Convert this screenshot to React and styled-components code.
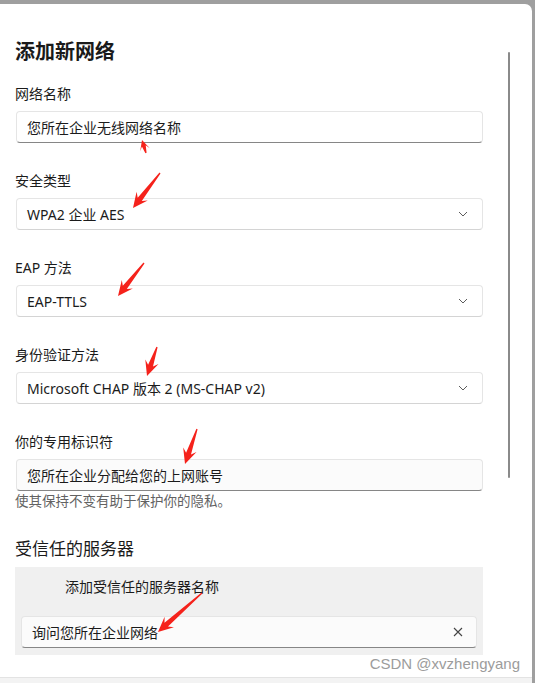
import React from "react";
import styled, { createGlobalStyle } from "styled-components";

const Global = createGlobalStyle`
  html, body { margin: 0; padding: 0; }
  body {
    background: #9f9f9f;
    font-family: "Segoe UI", "Noto Sans", "Noto Sans CJK SC", sans-serif;
    color: #1b1b1b;
    overflow: hidden;
  }
`;

const Page = styled.div`
  position: relative;
  width: 535px;
  height: 683px;
  overflow: hidden;
`;

const Dialog = styled.div`
  position: relative;
  margin-top: 4px;
  width: 532px;
  height: 679px;
  background: #ffffff;
  border-top-right-radius: 7px;
  display: flex;
  flex-direction: column;
  overflow: hidden;
`;

const Content = styled.div`
  flex: 1;
  padding: 34px 0 0 15px;
  overflow: hidden;
`;

const Footer = styled.div`
  height: 5px;
  background: #f3f3f3;
  border-top: 1px solid #e3e3e3;
`;

const Title = styled.h1`
  margin: 0 0 18px;
  font-size: 20px;
  line-height: 28px;
  font-weight: 600;
  font-family: "Segoe UI", "Noto Sans", "Noto Sans CJK SC", sans-serif;
  color: #1a1a1a;
`;

const Field = styled.div`
  width: 468px;
  margin-bottom: ${(p) => p.$gap ?? 28}px;
`;

const Label = styled.div`
  font-size: 14px;
  line-height: 20px;
  color: #1b1b1b;
  margin-bottom: 7px;
`;

const Box = styled.div`
  box-sizing: border-box;
  height: 32px;
  margin-left: 1px;
  width: 467px;
  border: 1px solid #e5e5e5;
  border-bottom-color: ${(p) => (p.$input ? "#868686" : "#d4d4d4")};
  border-radius: 4px;
  background: ${(p) => p.$bg || "#ffffff"};
  display: flex;
  align-items: center;
  padding: 0 14px 0 10px;
  font-size: 14px;
  color: #1b1b1b;
`;

const BoxText = styled.span`
  flex: 1;
  white-space: nowrap;
`;

const Helper = styled.div`
  margin-top: 1px;
  font-size: 13.5px;
  line-height: 19px;
  color: #626262;
`;

const Section = styled.h2`
  margin: 26px 0 6px;
  font-size: 17px;
  line-height: 24px;
  font-weight: 400;
  color: #1a1a1a;
`;

const Panel = styled.div`
  box-sizing: border-box;
  width: 468px;
  height: 88px;
  background: #f0f0f0;
  padding: 10px 6px 8px 6px;
`;

const PanelLabel = styled.div`
  padding-left: 44px;
  font-size: 14px;
  line-height: 20px;
  margin-bottom: 19px;
  color: #1b1b1b;
`;

const PanelBox = styled(Box)`
  margin-left: 0;
  width: 456px;
  background: #fbfbfb;
  padding-right: 13px;
`;

const Scrollbar = styled.div`
  position: absolute;
  left: 508px;
  top: 52px;
  width: 2px;
  height: 426px;
  background: #8a8a8a;
  border-radius: 1px;
`;

const Watermark = styled.div`
  position: absolute;
  right: 15px;
  top: 655px;
  font-family: "Liberation Sans", Arial, sans-serif;
  font-size: 15px;
  line-height: 18px;
  color: #9c9c9c;
`;

const Overlay = styled.svg`
  position: absolute;
  left: 0;
  top: 0;
  pointer-events: none;
`;

const Chevron = () => (
  <svg width="10" height="6" viewBox="0 0 10 6">
    <path d="M1 1 L5 5 L9 1" fill="none" stroke="#5c5c5c" strokeWidth="1" />
  </svg>
);

const Cross = () => (
  <svg width="10" height="10" viewBox="0 0 10 10">
    <path d="M1 1 L9 9 M9 1 L1 9" fill="none" stroke="#444" strokeWidth="1.1" />
  </svg>
);

function arrowPoints(x1, y1, x2, y2, small) {
  const dx = x2 - x1;
  const dy = y2 - y1;
  const len = Math.hypot(dx, dy);
  const ux = dx / len;
  const uy = dy / len;
  const nx = -uy;
  const ny = ux;
  const headLen = small ? len * 0.75 : 15;
  const headW = small ? 5 : 7;
  const neckW = small ? 2 : 2.6;
  const tailW = 0.6;
  const bx = x2 - ux * headLen;
  const by = y2 - uy * headLen;
  const ix = x2 - ux * (headLen - 4);
  const iy = y2 - uy * (headLen - 4);
  const pts = [
    [x1 + nx * tailW, y1 + ny * tailW],
    [ix + nx * neckW, iy + ny * neckW],
    [bx + nx * headW, by + ny * headW],
    [x2, y2],
    [bx - nx * headW, by - ny * headW],
    [ix - nx * neckW, iy - ny * neckW],
    [x1 - nx * tailW, y1 - ny * tailW],
  ];
  return pts.map((p) => p[0].toFixed(1) + "," + p[1].toFixed(1)).join(" ");
}

const arrows = [
  [146, 153, 142, 140, true],
  [160, 173, 133, 208],
  [144, 263, 118, 296],
  [157, 347, 147, 376],
  [197, 429, 185, 464],
  [202, 593, 158, 632],
];

export default function App() {
  return (
    <Page>
      <Global />
      <Dialog>
        <Content>
          <Title>添加新网络</Title>
          <Field>
            <Label>网络名称</Label>
            <Box $input>
              <BoxText>您所在企业无线网络名称</BoxText>
            </Box>
          </Field>
          <Field>
            <Label>安全类型</Label>
            <Box>
              <BoxText>WPA2 企业 AES</BoxText>
              <Chevron />
            </Box>
          </Field>
          <Field>
            <Label>EAP 方法</Label>
            <Box>
              <BoxText>EAP-TTLS</BoxText>
              <Chevron />
            </Box>
          </Field>
          <Field>
            <Label>身份验证方法</Label>
            <Box>
              <BoxText>Microsoft CHAP 版本 2 (MS-CHAP v2)</BoxText>
              <Chevron />
            </Box>
          </Field>
          <Field $gap={0}>
            <Label>你的专用标识符</Label>
            <Box $input $bg="#fbfbfb">
              <BoxText>您所在企业分配给您的上网账号</BoxText>
            </Box>
            <Helper>使其保持不变有助于保护你的隐私。</Helper>
          </Field>
          <Section>受信任的服务器</Section>
          <Panel>
            <PanelLabel>添加受信任的服务器名称</PanelLabel>
            <PanelBox $input>
              <BoxText>询问您所在企业网络</BoxText>
              <Cross />
            </PanelBox>
          </Panel>
        </Content>
        <Footer />
      </Dialog>
      <Scrollbar />
      <Watermark>CSDN @xvzhengyang</Watermark>
      <Overlay width="535" height="683" viewBox="0 0 535 683">
        {arrows.map(([x1, y1, x2, y2, s], i) => (
          <polygon key={i} points={arrowPoints(x1, y1, x2, y2, s)} fill="#f5221b" />
        ))}
      </Overlay>
    </Page>
  );
}
